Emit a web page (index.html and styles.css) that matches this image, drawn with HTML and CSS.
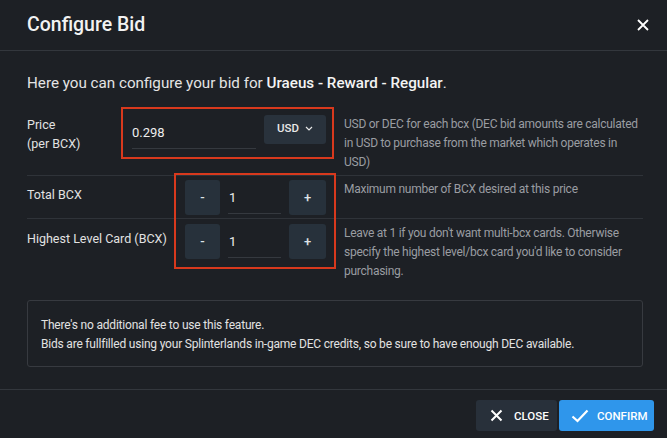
FILE: index.html
```html
<html>

<head>
    <meta name="viewport" content="width=device-width, initial-scale=1.0">
    <meta charset="UTF-8">
    <title>Configure Bid</title>
    <link rel="stylesheet" href="styles.css">
</head>

<body>
    <div class="modal">
        <div class="modal-head">
            <h1>Configure Bid</h1>
            <button class="head-close" aria-label="close">
                <svg width="12" height="12" viewBox="0 0 12 12"><path d="M1 1L11 11M11 1L1 11" stroke="#fff" stroke-width="1.8" fill="none"/></svg>
            </button>
        </div>
        <div class="modal-body">
            <p class="intro">Here you can configure your bid for <strong>Uraeus - Reward - Regular</strong>.</p>
            <div class="form">
                <div class="row row-price">
                    <div class="label">Price<br>(per BCX)</div>
                    <div class="controls">
                        <div class="field field-price">0.298</div>
                        <button class="currency">USD
                            <svg width="8" height="5" viewBox="0 0 8 5"><path d="M1 1L4 4L7 1" stroke="#e8e8e8" stroke-width="1.2" fill="none"/></svg>
                        </button>
                    </div>
                    <div class="desc">USD or DEC for each bcx (DEC bid amounts are calculated in USD to purchase from the market which operates in USD)</div>
                </div>
                <div class="row row-qty">
                    <div class="label">Total BCX</div>
                    <div class="controls">
                        <button class="step minus">-</button>
                        <div class="field field-num">1</div>
                        <button class="step plus">+</button>
                    </div>
                    <div class="desc">Maximum number of BCX desired at this price</div>
                </div>
                <div class="row row-qty last">
                    <div class="label">Highest Level Card (BCX)</div>
                    <div class="controls">
                        <button class="step minus">-</button>
                        <div class="field field-num">1</div>
                        <button class="step plus">+</button>
                    </div>
                    <div class="desc">Leave at 1 if you don't want multi-bcx cards. Otherwise specify the highest level/bcx card you'd like to consider purchasing.</div>
                </div>
                <!-- highlight marks drawn over the form -->
                <div class="mark mark-price"></div>
                <div class="mark mark-qty"></div>
            </div>
            <div class="note">
                There's no additional fee to use this feature.<br>
                Bids are fullfilled using your Splinterlands in-game DEC credits, so be sure to have enough DEC available.
            </div>
        </div>
        <div class="modal-foot">
            <button class="btn btn-close">
                <svg width="13" height="13" viewBox="0 0 13 13"><path d="M1.5 1.5L11.5 11.5M11.5 1.5L1.5 11.5" stroke="#fff" stroke-width="2" fill="none"/></svg>
                CLOSE
            </button>
            <button class="btn btn-confirm">
                <svg width="18" height="14" viewBox="0 0 18 14"><path d="M1.5 7.5L6.5 12L16.5 1.5" stroke="#fff" stroke-width="2.2" fill="none"/></svg>
                CONFIRM
            </button>
        </div>
    </div>
</body>

</html>
```

FILE: styles.css
```css
body {
    margin: 0;
    background-color: #1d2025;
    color: #e6e6e6;
    font-family: Roboto, "Liberation Sans", sans-serif;
}

button {
    font-family: inherit;
    border: none;
    cursor: pointer;
}

.modal {
    width: 667px;
    height: 438px;
    display: flex;
    flex-direction: column;
}

.modal-head {
    height: 50px;
    border-bottom: 1px solid #33373d;
    display: flex;
    align-items: center;
    justify-content: space-between;
    padding: 0 18px 0 27px;
}

.modal-head h1 {
    margin: 0;
    font-size: 19.5px;
    font-weight: 500;
    color: #f2f2f2;
    padding-bottom: 1px;
}

.head-close {
    background: none;
    padding: 0;
    width: 12px;
    height: 12px;
    display: flex;
}

.modal-body {
    padding: 20px 24px 22px 27px;
}

.intro {
    margin: 0 0 12px 0;
    font-size: 15.2px;
    line-height: 24px;
    color: #e4e4e4;
}

.intro strong {
    font-weight: 500;
    color: #f4f4f4;
}

.form {
    position: relative;
}

.row {
    display: grid;
    grid-template-columns: 95px 212px 1fr;
    border-bottom: 1px solid #2f3339;
}

.row.last {
    border-bottom: none;
}

.row-price {
    padding: 8px 0 3px 0;
}

.row-qty {
    padding: 4px 0 3px 0;
}

.row-qty.last {
    padding-top: 5px;
}

.label {
    font-size: 12.5px;
    line-height: 19px;
    color: #e2e2e2;
    white-space: nowrap;
}

.row-qty .label {
    padding-top: 5px;
}

.controls {
    display: flex;
    justify-content: flex-end;
    align-items: flex-start;
    gap: 8px;
    padding-right: 8px;
}

.desc {
    padding-left: 10px;
    font-size: 12px;
    letter-spacing: -0.26px;
    line-height: 19px;
    color: #9a9da2;
}

.field {
    border-bottom: 1px solid #35393f;
    font-size: 13px;
    color: #eeeeee;
}

.field-price {
    width: 124px;
    height: 33px;
    line-height: 35px;
}

.field-num {
    width: 52px;
    height: 33px;
    line-height: 35px;
    padding-left: 1px;
}

.currency {
    width: 62px;
    height: 29px;
    background-color: #29323c;
    color: #e8e8e8;
    border-radius: 3px;
    font-size: 11.5px;
    font-weight: 500;
    display: flex;
    align-items: center;
    justify-content: center;
    gap: 6px;
    padding: 0 0 3px 0;
}

.step {
    width: 35px;
    height: 35px;
    background-color: #27313b;
    color: #dfe3e8;
    border-radius: 3px;
    font-size: 13px;
    font-weight: 500;
    padding: 0;
}

.step.plus {
    width: 37px;
}

.mark {
    position: absolute;
    border: 2px solid #d8391d;
    box-sizing: border-box;
}

.mark-price {
    left: 94px;
    top: 0;
    width: 213px;
    height: 52px;
}

.mark-qty {
    left: 147px;
    top: 66px;
    width: 162px;
    height: 96px;
}

.note {
    margin-top: 16px;
    border: 1px solid #373a40;
    border-radius: 3px;
    padding: 15px 14px 12px 13px;
    font-size: 12px;
    letter-spacing: -0.2px;
    line-height: 19px;
    color: #e2e2e2;
}

.modal-foot {
    border-top: 1px solid #33373d;
    display: flex;
    justify-content: flex-end;
    gap: 2px;
    padding: 10px 13px 0 0;
}

.btn {
    height: 31px;
    border-radius: 3px;
    color: #ffffff;
    font-size: 11.5px;
    font-weight: 500;
    display: flex;
    align-items: center;
    gap: 11px;
}

.btn-close {
    width: 81px;
    background-color: #28303a;
    padding: 0 0 0 14px;
}

.btn-confirm {
    width: 95px;
    background-color: #2f96eb;
    padding: 0 0 0 12px;
    gap: 8px;
}
```
